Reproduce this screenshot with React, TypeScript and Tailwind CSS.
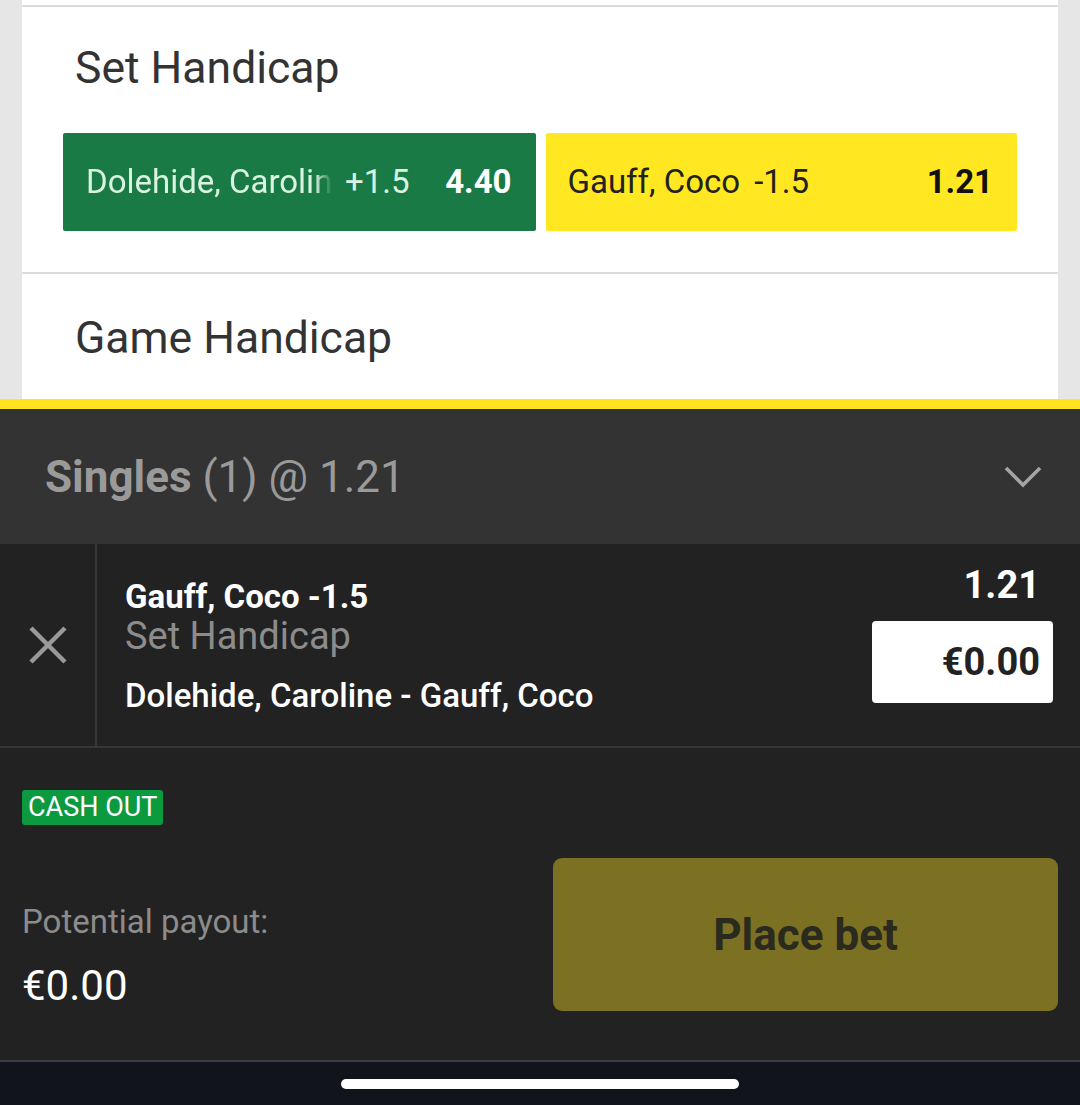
export default function App() {
  return (
    <div className="w-[1080px] h-[1105px] flex flex-col bg-[#e6e6e6] font-['Roboto','Liberation_Sans',sans-serif] overflow-hidden">
      {/* market list */}
      <div className="px-[22px] flex flex-col">
        <div className="h-[5px] bg-white" />
        <div className="h-[2px] bg-[#dcdcdc]" />
        <div className="bg-white px-[41px] pb-[41px]">
          <div className="h-[126px] flex items-center pl-[12px] pb-[4px]">
            <h2 className="text-[44.5px] leading-none text-[#333]">Set Handicap</h2>
          </div>
          <div className="flex gap-[10px]">
            <button className="flex-1 h-[98px] rounded-[2px] bg-[#197a45] flex items-center gap-[13px] pl-[23px] pr-[24px] text-[33px]">
              <span className="max-w-[246px] overflow-hidden whitespace-nowrap text-[#d9f3e1] [mask-image:linear-gradient(to_right,black_93%,transparent)]">
                Dolehide, Caroline
              </span>
              <span className="text-[#d9f3e1]">+1.5</span>
              <span className="ml-auto font-bold text-white">4.40</span>
            </button>
            <button className="flex-1 h-[98px] rounded-[2px] bg-[#ffe821] flex items-center gap-[14px] pl-[22px] pr-[24px] text-[33px] text-[#222]">
              <span className="whitespace-nowrap">Gauff, Coco</span>
              <span>-1.5</span>
              <span className="ml-auto font-bold text-[#111]">1.21</span>
            </button>
          </div>
        </div>
        <div className="h-[2px] bg-[#dcdcdc]" />
        <div className="bg-white h-[125px] pl-[53px] pt-[40px]">
          <h2 className="text-[44.5px] leading-[48px] text-[#333]">Game Handicap</h2>
        </div>
      </div>

      {/* bet slip */}
      <div className="flex-1 flex flex-col bg-[#222]">
        <div className="h-[10px] bg-[#ffe41f]" />
        <div className="h-[135px] bg-[#333] flex items-center justify-between pl-[45px] pr-[38px] text-[#9a9a9a]">
          <div className="text-[44px] leading-none">
            <span className="font-bold">Singles</span> (1) @ 1.21
          </div>
          <svg width="38" height="24" viewBox="0 0 38 24" fill="none">
            <path d="M2 3 L19 20 L36 3" stroke="#a5a5a5" strokeWidth="3.5" />
          </svg>
        </div>

        <div className="h-[204px] flex border-b-2 border-[#363636]">
          <div className="w-[97px] flex items-center justify-center border-r-2 border-[#363636]">
            <svg width="40" height="40" viewBox="0 0 40 40" fill="none">
              <path d="M3 3 L37 37 M37 3 L3 37" stroke="#9a9a9a" strokeWidth="4.5" />
            </svg>
          </div>
          <div className="flex-1 flex pl-[28px] pr-[27px]">
            <div className="flex-1 flex flex-col pt-[34px]">
              <div className="text-[33px] leading-[38px] font-bold text-white">Gauff, Coco -1.5</div>
              <div className="text-[38px] leading-[40px] text-[#8c8c8c]">Set Handicap</div>
              <div className="mt-[21px] text-[33px] leading-[38px] font-medium text-white">
                Dolehide, Caroline - Gauff, Coco
              </div>
            </div>
            <div className="flex flex-col items-end pt-[20px]">
              <div className="text-[38px] leading-[42px] font-bold text-white pr-[13px]">1.21</div>
              <div className="mt-[15px] w-[181px] h-[82px] rounded-[4px] bg-white flex items-center justify-end pr-[13px] text-[38px] font-bold text-[#222]">
                €0.00
              </div>
            </div>
          </div>
        </div>

        <div className="flex-1 flex flex-col pl-[22px] pr-[22px]">
          <div className="mt-[42px] self-start h-[35px] px-[6px] rounded-[3px] bg-[#0c9a40] flex items-center text-[27px] leading-none text-white">
            CASH OUT
          </div>
          <div className="mt-[33px] flex items-start">
            <div className="flex-1 pt-[44px]">
              <div className="text-[33px] leading-[40px] text-[#8c8c8c]">Potential payout:</div>
              <div className="mt-[21px] text-[42px] leading-[46px] text-white">€0.00</div>
            </div>
            <button className="w-[505px] h-[153px] rounded-[9px] bg-[#7c7022] flex items-center justify-center text-[44px] font-bold text-[#2b2a1f]">
              Place bet
            </button>
          </div>
        </div>

        <div className="h-[2px] bg-[#3b3c46]" />
        <div className="h-[43px] bg-[#11141b] flex items-center justify-center">
          <div className="w-[398px] h-[10px] rounded-full bg-white" />
        </div>
      </div>
    </div>
  );
}
